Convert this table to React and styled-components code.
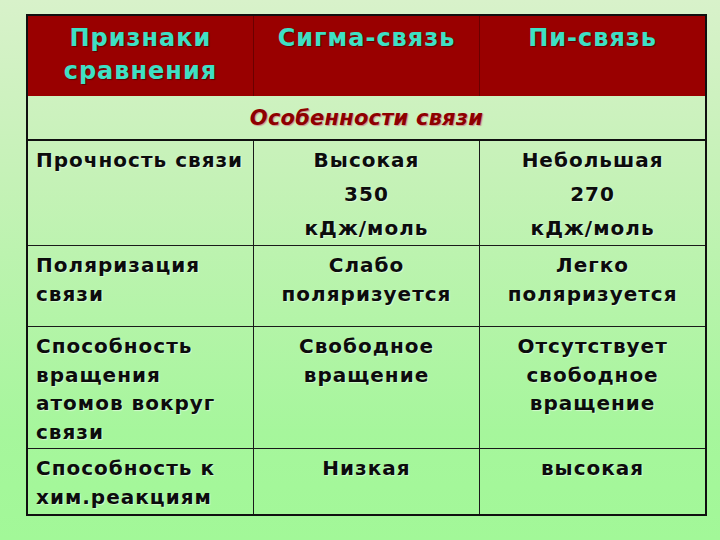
import React from "react";
import styled, { createGlobalStyle } from "styled-components";

const Global = createGlobalStyle`
  html, body {
    margin: 0;
    padding: 0;
  }
  body {
    width: 720px;
    height: 540px;
    overflow: hidden;
    font-family: "DejaVu Sans", Verdana, sans-serif;
  }
`;

const Page = styled.div`
  width: 720px;
  height: 540px;
  box-sizing: border-box;
  padding: 14px 0 0 26px;
  background: linear-gradient(180deg, #d8f2ca 0%, #c4f2b6 35%, #a6f69c 80%, #a2f898 100%);
`;

const Table = styled.table`
  width: 681px;
  border-collapse: collapse;
  table-layout: fixed;
  border: 2px solid #101010;
`;

const HeadRow = styled.tr`
  height: 81px;
  background: #990000;
`;

const HeadCell = styled.th`
  vertical-align: top;
  padding: 6px 2px 0;
  color: #3ee0c4;
  font-size: 24px;
  font-weight: bold;
  line-height: 33px;
  letter-spacing: 1px;
  text-align: center;
  border-left: 1px solid #6a0000;
  text-shadow: 1px 1px 1px #5a0000;
`;

const SectionCell = styled.td`
  height: 43px;
  padding: 0;
  text-align: center;
  vertical-align: middle;
  color: #8e0000;
  font-size: 21px;
  font-weight: bold;
  font-style: italic;
  border-bottom: 2px solid #101010;
  text-shadow: 1px 1px 1px #d09090;
  letter-spacing: 0.2px;
`;

const Row = styled.tr`
  height: ${(p) => p.$h}px;
`;

const Cell = styled.td`
  vertical-align: top;
  padding: ${(p) => (p.$label ? "5px 4px 0 8px" : "5px 2px 0")};
  text-align: ${(p) => (p.$label ? "left" : "center")};
  color: #0c0c0c;
  font-size: 20px;
  font-weight: bold;
  line-height: 28.5px;
  letter-spacing: 1px;
  border: 1px solid #1a1a1a;
  text-shadow: 1px 1px 1px rgba(255, 255, 255, 0.5);
`;

const Line = styled.div`
  line-height: 34px;
  margin-top: ${(p) => (p.$first ? "-3px" : "0")};
`;

const rows = [
  {
    h: 105,
    label: "Прочность связи",
    sigma: ["Высокая", "350", "кДж/моль"],
    pi: ["Небольшая", "270", "кДж/моль"],
  },
  {
    h: 81,
    label: "Поляризация связи",
    sigma: "Слабо поляризуется",
    pi: "Легко поляризуется",
  },
  {
    h: 122,
    label: "Способность вращения атомов вокруг связи",
    sigma: "Свободное вращение",
    pi: "Отсутствует свободное вращение",
  },
  {
    h: 66,
    label: "Способность к хим.реакциям",
    sigma: "Низкая",
    pi: "высокая",
  },
];

function Value({ v }) {
  if (Array.isArray(v)) {
    return v.map((t, i) => (
      <Line key={t + i} $first={i === 0}>
        {t}
      </Line>
    ));
  }
  return v;
}

export default function App() {
  return (
    <Page>
      <Global />
      <Table>
        <tbody>
          <HeadRow>
            <HeadCell>
              Признаки
              <br />
              сравнения
            </HeadCell>
            <HeadCell>Сигма-связь</HeadCell>
            <HeadCell>Пи-связь</HeadCell>
          </HeadRow>
          <tr>
            <SectionCell colSpan={3}>Особенности связи</SectionCell>
          </tr>
          {rows.map((r) => (
            <Row key={r.label} $h={r.h}>
              <Cell $label>{r.label}</Cell>
              <Cell>
                <Value v={r.sigma} />
              </Cell>
              <Cell>
                <Value v={r.pi} />
              </Cell>
            </Row>
          ))}
        </tbody>
      </Table>
    </Page>
  );
}
